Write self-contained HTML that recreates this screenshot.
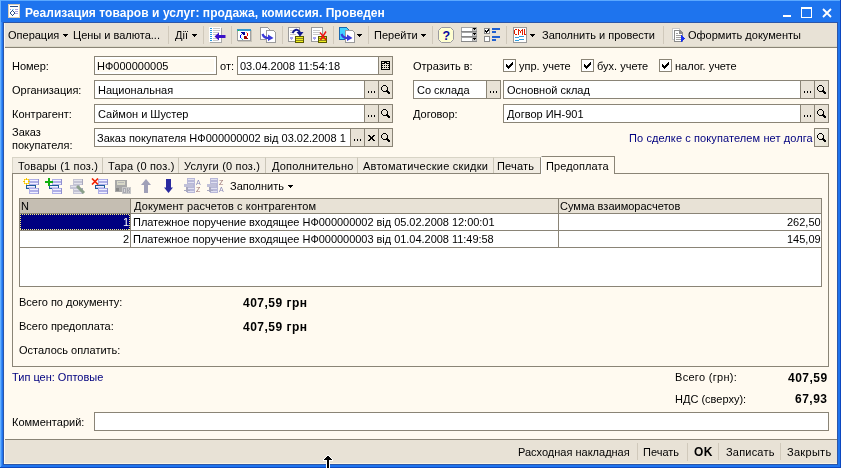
<!DOCTYPE html>
<html><head><meta charset="utf-8">
<style>
*{box-sizing:border-box;margin:0;padding:0}
html,body{width:841px;height:468px;overflow:hidden}
body{position:relative;background:#1e74ee;font:11px "Liberation Sans",sans-serif;color:#000}
.a{position:absolute}
svg.a{display:block}
.t{position:absolute;will-change:transform;white-space:pre;line-height:13px;font:11px "Liberation Sans",sans-serif}
.b{font-weight:bold}
.sep{position:absolute;width:1px;background:#d0c9bb}
.inp{position:absolute;border:1px solid #8a8476;height:19px}
.dots{position:absolute;width:1px;height:2px;background:#000;box-shadow:3px 0 0 #000,6px 0 0 #000}
.chk{position:absolute;width:13px;height:13px;border:1px solid #8a8476;background:#fff}
.tab{position:absolute;top:157px;height:16px;background:#f1ece2;border-top:1px solid #d8d4c6;border-right:1px solid #cbc6b8}
.line{position:absolute;background:#8a8476}
</style></head><body>

<div class="a" style="left:0;top:0;width:841px;height:1px;background:#5aa8ff"></div>
<div class="a" style="left:0;top:0;width:1px;height:468px;background:#64b0ff"></div>
<div class="a" style="left:1px;top:22px;width:1px;height:444px;background:#3c8cf8"></div>
<div class="a" style="left:3px;top:22px;width:1px;height:443px;background:#2c56a8"></div>
<div class="a" style="left:837px;top:22px;width:1px;height:443px;background:#2c56a8"></div>
<div class="a" style="left:840px;top:0;width:1px;height:468px;background:#0c48c0"></div>
<div class="a" style="left:3px;top:464px;width:835px;height:1px;background:#2c56a8"></div>
<div class="a" style="left:3px;top:22px;width:835px;height:1px;background:#2c56a8"></div>
<div class="a" style="left:4px;top:23px;width:1px;height:441px;background:#faf8f0;z-index:1"></div>
<div class="a" style="left:0;top:467px;width:841px;height:1px;background:#0c48c0"></div>
<svg class="a" style="left:8px;top:4px" width="12" height="14" shape-rendering="crispEdges">
<rect x="0" y="0" width="12" height="14" fill="#d8ccb4"/><rect x="1" y="1" width="10" height="12" fill="#fff"/>
<rect x="2" y="2" width="8" height="1" fill="#2a4e86"/>
<rect x="2" y="5" width="1" height="1" fill="#9a8ee0"/><rect x="4" y="5" width="2" height="1" fill="#8fe0f8"/><rect x="7" y="5" width="3" height="1" fill="#a9a0e0"/>
<rect x="7" y="7" width="3" height="1" fill="#a9a0e0"/><rect x="7" y="9" width="3" height="1" fill="#a9a0e0"/>
<rect x="4" y="6" width="1" height="1" fill="#2a4e86"/><rect x="3" y="7" width="1" height="1" fill="#2a4e86"/><rect x="5" y="7" width="1" height="1" fill="#2a4e86"/>
<rect x="2" y="8" width="1" height="2" fill="#2a4e86"/><rect x="6" y="8" width="1" height="2" fill="#2a4e86"/>
<rect x="3" y="10" width="1" height="1" fill="#2a4e86"/><rect x="5" y="10" width="1" height="1" fill="#2a4e86"/><rect x="4" y="11" width="1" height="1" fill="#2a4e86"/>
</svg>
<div class="t" style="left:25px;top:6px;font-weight:bold;font-size:12px;color:#fff;letter-spacing:0.06px">Реализация товаров и услуг: продажа, комиссия. Проведен</div>
<div class="a" style="left:783px;top:15px;width:8px;height:2px;background:#fff"></div>
<div class="a" style="left:801px;top:7px;width:11px;height:11px;border:1px solid #fff;border-top-width:2px"></div>
<svg class="a" style="left:822px;top:8px" width="10" height="10" viewBox="0 0 10 10"><path d="M1 1 L9 9 M9 1 L1 9" stroke="#fff" stroke-width="1.8"/></svg>
<div class="a" style="left:4px;top:23px;width:833px;height:24px;background:#e8e2d6"></div>
<div class="a" style="left:4px;top:46px;width:833px;height:1px;background:#dcd8c8"></div>
<div class="a" style="left:4px;top:47px;width:833px;height:1px;background:#8a8476"></div>
<div class="t" style="left:8px;top:29px;">Операция</div>
<svg class="a" style="left:63px;top:34px" width="5" height="3" shape-rendering="crispEdges"><rect x="0" y="0" width="5" height="1"/><rect x="1" y="1" width="3" height="1"/><rect x="2" y="2" width="1" height="1"/></svg>
<div class="t" style="left:73px;top:29px;">Цены и валюта...</div>
<div class="sep" style="left:168px;top:26px;height:18px"></div>
<div class="t" style="left:175px;top:29px;">Дії</div>
<svg class="a" style="left:192px;top:34px" width="5" height="3" shape-rendering="crispEdges"><rect x="0" y="0" width="5" height="1"/><rect x="1" y="1" width="3" height="1"/><rect x="2" y="2" width="1" height="1"/></svg>
<div class="sep" style="left:203px;top:26px;height:18px"></div>
<svg class="a" style="left:209px;top:27px" width="17" height="16" shape-rendering="crispEdges">
<rect x="1" y="1" width="12" height="15" fill="#a8a8a8"/><rect x="0" y="0" width="12" height="15" fill="#fff"/>
<g fill="#2a9ae0"><rect x="1" y="1" width="2" height="1"/><rect x="1" y="3" width="2" height="1"/><rect x="1" y="5" width="2" height="1"/><rect x="1" y="7" width="2" height="1"/><rect x="1" y="9" width="2" height="1"/><rect x="1" y="11" width="2" height="1"/><rect x="1" y="13" width="2" height="1"/></g>
<g fill="#c8c8c8"><rect x="4" y="1" width="7" height="1"/><rect x="4" y="3" width="7" height="1"/><rect x="4" y="5" width="6" height="1"/><rect x="4" y="7" width="5" height="1"/><rect x="4" y="11" width="5" height="1"/><rect x="4" y="13" width="5" height="1"/></g>
</svg>
<svg class="a" style="left:214px;top:32px" width="12" height="9" viewBox="0 0 12 9"><path d="M0.5 4.5 L5 0.5 L5 3 L11.5 3 L11.5 6 L5 6 L5 8.5 Z" fill="#3a10c8"/></svg>
<div class="sep" style="left:231px;top:26px;height:18px"></div>
<svg class="a" style="left:237px;top:29px" width="15" height="13" shape-rendering="crispEdges"><rect x="1" y="12" width="14" height="1" fill="#c8c4b8"/><rect x="14" y="1" width="1" height="12" fill="#c8c4b8"/><rect x="0" y="0" width="1" height="1" fill="#3399cc"/><rect x="0" y="1" width="1" height="1" fill="#3399cc"/><rect x="0" y="11" width="1" height="1" fill="#a0a0a0"/><rect x="1" y="0" width="1" height="1" fill="#3399cc"/><rect x="1" y="1" width="1" height="1" fill="#20d020"/><rect x="1" y="11" width="1" height="1" fill="#a0a0a0"/><rect x="2" y="0" width="1" height="1" fill="#3399cc"/><rect x="2" y="1" width="1" height="1" fill="#3399cc"/><rect x="2" y="11" width="1" height="1" fill="#a0a0a0"/><rect x="3" y="0" width="1" height="1" fill="#3399cc"/><rect x="3" y="1" width="1" height="1" fill="#3399cc"/><rect x="3" y="11" width="1" height="1" fill="#a0a0a0"/><rect x="4" y="0" width="1" height="1" fill="#3399cc"/><rect x="4" y="1" width="1" height="1" fill="#3399cc"/><rect x="4" y="11" width="1" height="1" fill="#a0a0a0"/><rect x="5" y="0" width="1" height="1" fill="#3399cc"/><rect x="5" y="1" width="1" height="1" fill="#3399cc"/><rect x="5" y="11" width="1" height="1" fill="#a0a0a0"/><rect x="6" y="0" width="1" height="1" fill="#3399cc"/><rect x="6" y="1" width="1" height="1" fill="#3399cc"/><rect x="6" y="11" width="1" height="1" fill="#a0a0a0"/><rect x="7" y="0" width="1" height="1" fill="#3399cc"/><rect x="7" y="1" width="1" height="1" fill="#3399cc"/><rect x="7" y="11" width="1" height="1" fill="#a0a0a0"/><rect x="8" y="0" width="1" height="1" fill="#3399cc"/><rect x="8" y="1" width="1" height="1" fill="#3399cc"/><rect x="8" y="11" width="1" height="1" fill="#a0a0a0"/><rect x="9" y="0" width="1" height="1" fill="#3399cc"/><rect x="9" y="1" width="1" height="1" fill="#3399cc"/><rect x="9" y="11" width="1" height="1" fill="#a0a0a0"/><rect x="10" y="0" width="1" height="1" fill="#3399cc"/><rect x="10" y="1" width="1" height="1" fill="#3399cc"/><rect x="10" y="11" width="1" height="1" fill="#a0a0a0"/><rect x="11" y="0" width="1" height="1" fill="#3399cc"/><rect x="11" y="1" width="1" height="1" fill="#3399cc"/><rect x="11" y="11" width="1" height="1" fill="#a0a0a0"/><rect x="12" y="0" width="1" height="1" fill="#3399cc"/><rect x="12" y="1" width="1" height="1" fill="#3399cc"/><rect x="12" y="11" width="1" height="1" fill="#a0a0a0"/><rect x="13" y="0" width="1" height="1" fill="#3399cc"/><rect x="13" y="1" width="1" height="1" fill="#3399cc"/><rect x="13" y="11" width="1" height="1" fill="#a0a0a0"/><rect x="0" y="2" width="1" height="1" fill="#a0a0a0"/><rect x="13" y="2" width="1" height="1" fill="#a0a0a0"/><rect x="1" y="2" width="1" height="1" fill="#ffffff"/><rect x="2" y="2" width="1" height="1" fill="#ffffff"/><rect x="3" y="2" width="1" height="1" fill="#ffffff"/><rect x="4" y="2" width="1" height="1" fill="#ffffff"/><rect x="5" y="2" width="1" height="1" fill="#ffffff"/><rect x="6" y="2" width="1" height="1" fill="#ffffff"/><rect x="7" y="2" width="1" height="1" fill="#ffffff"/><rect x="8" y="2" width="1" height="1" fill="#ffffff"/><rect x="9" y="2" width="1" height="1" fill="#ffffff"/><rect x="10" y="2" width="1" height="1" fill="#ffffff"/><rect x="11" y="2" width="1" height="1" fill="#ffffff"/><rect x="12" y="2" width="1" height="1" fill="#ffffff"/><rect x="0" y="3" width="1" height="1" fill="#a0a0a0"/><rect x="13" y="3" width="1" height="1" fill="#a0a0a0"/><rect x="1" y="3" width="1" height="1" fill="#ffffff"/><rect x="2" y="3" width="1" height="1" fill="#ffffff"/><rect x="3" y="3" width="1" height="1" fill="#ffffff"/><rect x="4" y="3" width="1" height="1" fill="#000099"/><rect x="5" y="3" width="1" height="1" fill="#000099"/><rect x="6" y="3" width="1" height="1" fill="#000099"/><rect x="7" y="3" width="1" height="1" fill="#000099"/><rect x="8" y="3" width="1" height="1" fill="#ffffff"/><rect x="9" y="3" width="1" height="1" fill="#ff9060"/><rect x="10" y="3" width="1" height="1" fill="#ffffff"/><rect x="11" y="3" width="1" height="1" fill="#ffffff"/><rect x="12" y="3" width="1" height="1" fill="#ffffff"/><rect x="0" y="4" width="1" height="1" fill="#a0a0a0"/><rect x="13" y="4" width="1" height="1" fill="#a0a0a0"/><rect x="1" y="4" width="1" height="1" fill="#ffffff"/><rect x="2" y="4" width="1" height="1" fill="#ffffff"/><rect x="3" y="4" width="1" height="1" fill="#ffffff"/><rect x="4" y="4" width="1" height="1" fill="#ffffff"/><rect x="5" y="4" width="1" height="1" fill="#000099"/><rect x="6" y="4" width="1" height="1" fill="#000099"/><rect x="7" y="4" width="1" height="1" fill="#000099"/><rect x="8" y="4" width="1" height="1" fill="#ffffff"/><rect x="9" y="4" width="1" height="1" fill="#ffffff"/><rect x="10" y="4" width="1" height="1" fill="#ff0000"/><rect x="11" y="4" width="1" height="1" fill="#ffffff"/><rect x="12" y="4" width="1" height="1" fill="#ffffff"/><rect x="0" y="5" width="1" height="1" fill="#a0a0a0"/><rect x="13" y="5" width="1" height="1" fill="#a0a0a0"/><rect x="1" y="5" width="1" height="1" fill="#ffffff"/><rect x="2" y="5" width="1" height="1" fill="#ffffff"/><rect x="3" y="5" width="1" height="1" fill="#ffffff"/><rect x="4" y="5" width="1" height="1" fill="#5070c0"/><rect x="5" y="5" width="1" height="1" fill="#ffffff"/><rect x="6" y="5" width="1" height="1" fill="#000099"/><rect x="7" y="5" width="1" height="1" fill="#000099"/><rect x="8" y="5" width="1" height="1" fill="#ffffff"/><rect x="9" y="5" width="1" height="1" fill="#ffffff"/><rect x="10" y="5" width="1" height="1" fill="#ff0000"/><rect x="11" y="5" width="1" height="1" fill="#ffffff"/><rect x="12" y="5" width="1" height="1" fill="#ffffff"/><rect x="0" y="6" width="1" height="1" fill="#a0a0a0"/><rect x="13" y="6" width="1" height="1" fill="#a0a0a0"/><rect x="1" y="6" width="1" height="1" fill="#ffffff"/><rect x="2" y="6" width="1" height="1" fill="#ffffff"/><rect x="3" y="6" width="1" height="1" fill="#0000ff"/><rect x="4" y="6" width="1" height="1" fill="#ffffff"/><rect x="5" y="6" width="1" height="1" fill="#ffffff"/><rect x="6" y="6" width="1" height="1" fill="#ffffff"/><rect x="7" y="6" width="1" height="1" fill="#ffffff"/><rect x="8" y="6" width="1" height="1" fill="#ffffff"/><rect x="9" y="6" width="1" height="1" fill="#ffffff"/><rect x="10" y="6" width="1" height="1" fill="#ff0000"/><rect x="11" y="6" width="1" height="1" fill="#ffffff"/><rect x="12" y="6" width="1" height="1" fill="#ffffff"/><rect x="0" y="7" width="1" height="1" fill="#a0a0a0"/><rect x="13" y="7" width="1" height="1" fill="#a0a0a0"/><rect x="1" y="7" width="1" height="1" fill="#ffffff"/><rect x="2" y="7" width="1" height="1" fill="#ffffff"/><rect x="3" y="7" width="1" height="1" fill="#0000ff"/><rect x="4" y="7" width="1" height="1" fill="#ffffff"/><rect x="5" y="7" width="1" height="1" fill="#ffffff"/><rect x="6" y="7" width="1" height="1" fill="#ffffff"/><rect x="7" y="7" width="1" height="1" fill="#990000"/><rect x="8" y="7" width="1" height="1" fill="#990000"/><rect x="9" y="7" width="1" height="1" fill="#c04040"/><rect x="10" y="7" width="1" height="1" fill="#ffffff"/><rect x="11" y="7" width="1" height="1" fill="#ffffff"/><rect x="12" y="7" width="1" height="1" fill="#ffffff"/><rect x="0" y="8" width="1" height="1" fill="#a0a0a0"/><rect x="13" y="8" width="1" height="1" fill="#a0a0a0"/><rect x="1" y="8" width="1" height="1" fill="#ffffff"/><rect x="2" y="8" width="1" height="1" fill="#ffffff"/><rect x="3" y="8" width="1" height="1" fill="#0000ff"/><rect x="4" y="8" width="1" height="1" fill="#ffffff"/><rect x="5" y="8" width="1" height="1" fill="#ffffff"/><rect x="6" y="8" width="1" height="1" fill="#ffffff"/><rect x="7" y="8" width="1" height="1" fill="#990000"/><rect x="8" y="8" width="1" height="1" fill="#990000"/><rect x="9" y="8" width="1" height="1" fill="#990000"/><rect x="10" y="8" width="1" height="1" fill="#ffffff"/><rect x="11" y="8" width="1" height="1" fill="#ffffff"/><rect x="12" y="8" width="1" height="1" fill="#ffffff"/><rect x="0" y="9" width="1" height="1" fill="#a0a0a0"/><rect x="13" y="9" width="1" height="1" fill="#a0a0a0"/><rect x="1" y="9" width="1" height="1" fill="#ffffff"/><rect x="2" y="9" width="1" height="1" fill="#ffffff"/><rect x="3" y="9" width="1" height="1" fill="#ffffff"/><rect x="4" y="9" width="1" height="1" fill="#40b0e0"/><rect x="5" y="9" width="1" height="1" fill="#ffffff"/><rect x="6" y="9" width="1" height="1" fill="#ffffff"/><rect x="7" y="9" width="1" height="1" fill="#990000"/><rect x="8" y="9" width="1" height="1" fill="#990000"/><rect x="9" y="9" width="1" height="1" fill="#990000"/><rect x="10" y="9" width="1" height="1" fill="#990000"/><rect x="11" y="9" width="1" height="1" fill="#ffffff"/><rect x="12" y="9" width="1" height="1" fill="#ffffff"/><rect x="0" y="10" width="1" height="1" fill="#a0a0a0"/><rect x="13" y="10" width="1" height="1" fill="#a0a0a0"/><rect x="1" y="10" width="1" height="1" fill="#ffffff"/><rect x="2" y="10" width="1" height="1" fill="#ffffff"/><rect x="3" y="10" width="1" height="1" fill="#ffffff"/><rect x="4" y="10" width="1" height="1" fill="#ffffff"/><rect x="5" y="10" width="1" height="1" fill="#40b0e0"/><rect x="6" y="10" width="1" height="1" fill="#ffffff"/><rect x="7" y="10" width="1" height="1" fill="#ffffff"/><rect x="8" y="10" width="1" height="1" fill="#ffffff"/><rect x="9" y="10" width="1" height="1" fill="#ffffff"/><rect x="10" y="10" width="1" height="1" fill="#ffffff"/><rect x="11" y="10" width="1" height="1" fill="#ffffff"/><rect x="12" y="10" width="1" height="1" fill="#ffffff"/></svg>
<svg class="a" style="left:260px;top:27px" width="17" height="17" shape-rendering="crispEdges">
<path d="M0.5 0.5 H7.5 L9.5 2.5 V12.5 H0.5 Z" fill="#fff" stroke="#9a9a9a"/>
<path d="M6.5 3.5 H13.5 L15.5 5.5 V15.5 H6.5 Z" fill="#fff" stroke="#9a9a9a"/>
</svg>
<svg class="a" style="left:261px;top:32px" width="14" height="9" viewBox="0 0 14 9"><path d="M1.5 2 Q3 6 7 6" fill="none" stroke="#3a3ad8" stroke-width="2.2"/><path d="M7 2.5 L12.5 6 L7 9 Z" fill="#3a3ad8"/></svg>
<div class="sep" style="left:282px;top:26px;height:18px"></div>
<svg class="a" style="left:288px;top:27px" width="17" height="17" shape-rendering="crispEdges">
<rect x="0" y="0" width="12" height="15" fill="#9a9a9a"/><rect x="1" y="1" width="10" height="13" fill="#fff"/>
<g fill="#c8c8c8"><rect x="2" y="3" width="4" height="1"/><rect x="2" y="5" width="3" height="1"/><rect x="2" y="7" width="6" height="1"/></g>
<rect x="2" y="10" width="3" height="2" fill="#a8a8f0"/><rect x="3" y="12" width="1" height="1" fill="#a8a8f0"/>
<rect x="7" y="9" width="9" height="7" fill="#5a5a00"/><rect x="8" y="10" width="7" height="5" fill="#f0f020"/>
<rect x="8" y="11" width="7" height="1" fill="#8a8a20"/><rect x="8" y="13" width="7" height="1" fill="#8a8a20"/>
</svg>
<svg class="a" style="left:291px;top:28px" width="14" height="10" viewBox="0 0 14 10"><path d="M1.5 5 Q5 -1 9 4" fill="none" stroke="#101890" stroke-width="2"/><path d="M5.5 4 L12.5 4 L9 8.5 Z" fill="#101890"/></svg>
<svg class="a" style="left:311px;top:27px" width="17" height="17" shape-rendering="crispEdges">
<rect x="0" y="0" width="12" height="15" fill="#9a9a9a"/><rect x="1" y="1" width="10" height="13" fill="#fff"/>
<g fill="#c8c8c8"><rect x="2" y="3" width="7" height="1"/><rect x="2" y="5" width="7" height="1"/><rect x="2" y="7" width="7" height="1"/></g>
<rect x="2" y="10" width="3" height="2" fill="#a8a8f0"/><rect x="3" y="12" width="1" height="1" fill="#a8a8f0"/>
<rect x="7" y="9" width="9" height="7" fill="#5a5a00"/><rect x="8" y="10" width="7" height="5" fill="#f0f020"/>
<rect x="8" y="11" width="7" height="1" fill="#8a8a20"/><rect x="8" y="13" width="7" height="1" fill="#8a8a20"/>
</svg>
<svg class="a" style="left:319px;top:31px" width="8" height="10" viewBox="0 0 8 10"><path d="M1 1.5 L7 9 M7 0.5 L1.5 9" stroke="#f01010" stroke-width="1.4"/></svg>
<div class="sep" style="left:333px;top:26px;height:18px"></div>
<svg class="a" style="left:339px;top:27px" width="17" height="17" shape-rendering="crispEdges">
<path d="M0.5 0.5 H7.5 L9.5 2.5 V12.5 H0.5 Z" fill="#40d0ff" stroke="#1868b0"/>
<path d="M6.5 3.5 H13.5 L15.5 5.5 V15.5 H6.5 Z" fill="#fff" stroke="#9a9a9a"/>
</svg>
<svg class="a" style="left:340px;top:32px" width="14" height="9" viewBox="0 0 14 9"><path d="M1.5 2 Q3 6 7 6" fill="none" stroke="#3a3ad8" stroke-width="2.2"/><path d="M7 2.5 L12.5 6 L7 9 Z" fill="#3a3ad8"/></svg>
<svg class="a" style="left:357px;top:34px" width="5" height="3" shape-rendering="crispEdges"><rect x="0" y="0" width="5" height="1"/><rect x="1" y="1" width="3" height="1"/><rect x="2" y="2" width="1" height="1"/></svg>
<div class="sep" style="left:368px;top:26px;height:18px"></div>
<div class="t" style="left:374px;top:29px;">Перейти</div>
<svg class="a" style="left:421px;top:34px" width="5" height="3" shape-rendering="crispEdges"><rect x="0" y="0" width="5" height="1"/><rect x="1" y="1" width="3" height="1"/><rect x="2" y="2" width="1" height="1"/></svg>
<div class="sep" style="left:432px;top:26px;height:18px"></div>
<svg class="a" style="left:438px;top:27px" width="17" height="16" viewBox="0 0 17 16">
<path d="M3.5 0.5 H12.5 L15.5 3.5 V12.5 L12.5 15.5 H3.5 L0.5 12.5 V3.5 Z" fill="#ffffd0" stroke="#9a9aa0"/>
<text x="8.2" y="12.6" text-anchor="middle" font-family="Liberation Sans" font-weight="bold" font-size="12.5" fill="#0808a0">?</text>
</svg>
<svg class="a" style="left:461px;top:27px" width="16" height="15" shape-rendering="crispEdges"><g transform="translate(0,0)"><rect x="0" y="0" width="16" height="5" fill="#a4a4a4"/><rect x="1" y="1" width="10" height="3" fill="#fff"/><rect x="12" y="1" width="3" height="3" fill="#c4c4c4"/><rect x="12" y="1" width="3" height="1" fill="#000"/><rect x="13" y="2" width="1" height="1" fill="#000"/><rect x="0" y="4" width="16" height="1" fill="#888"/></g><g transform="translate(0,5)"><rect x="0" y="0" width="16" height="5" fill="#a4a4a4"/><rect x="1" y="1" width="10" height="3" fill="#fff"/><rect x="12" y="1" width="3" height="3" fill="#c4c4c4"/><rect x="12" y="1" width="3" height="1" fill="#000"/><rect x="13" y="2" width="1" height="1" fill="#000"/><rect x="0" y="4" width="16" height="1" fill="#888"/></g><g transform="translate(0,10)"><rect x="0" y="0" width="16" height="5" fill="#a4a4a4"/><rect x="1" y="1" width="10" height="3" fill="#fff"/><rect x="12" y="1" width="3" height="3" fill="#c4c4c4"/><rect x="12" y="1" width="3" height="1" fill="#000"/><rect x="13" y="2" width="1" height="1" fill="#000"/><rect x="0" y="4" width="16" height="1" fill="#888"/></g></svg>
<svg class="a" style="left:484px;top:28px" width="17" height="14" shape-rendering="crispEdges">
<rect x="0" y="0" width="6" height="6" fill="#8a8a8a"/><rect x="1" y="1" width="4" height="4" fill="#fff"/>
<path d="M1 2h1v1h1v-1h1v-1h1v2h-1v1h-1v1h-1v-1h-1z" fill="#000"/>
<rect x="0" y="8" width="6" height="6" fill="#8a8a8a"/><rect x="1" y="9" width="4" height="4" fill="#fff"/>
<g fill="#2060d0"><rect x="8" y="0" width="8" height="2"/><rect x="8" y="3" width="4" height="2"/><rect x="8" y="8" width="8" height="2"/><rect x="8" y="11" width="4" height="2"/></g>
</svg>
<div class="sep" style="left:506px;top:26px;height:18px"></div>
<svg class="a" style="left:513px;top:27px" width="14" height="16" shape-rendering="crispEdges">
<rect x="0" y="0" width="14" height="16" fill="#9a9a9a"/><rect x="1" y="1" width="12" height="14" fill="#fff"/>
<g fill="#e02000"><rect x="2" y="2" width="1" height="1"/><rect x="3" y="2" width="1" height="1"/><rect x="5" y="2" width="1" height="1"/><rect x="9" y="2" width="1" height="1"/><rect x="11" y="2" width="1" height="1"/><rect x="1" y="3" width="1" height="1"/><rect x="5" y="3" width="1" height="1"/><rect x="6" y="3" width="1" height="1"/><rect x="8" y="3" width="1" height="1"/><rect x="9" y="3" width="1" height="1"/><rect x="11" y="3" width="1" height="1"/><rect x="1" y="4" width="1" height="1"/><rect x="5" y="4" width="1" height="1"/><rect x="7" y="4" width="1" height="1"/><rect x="9" y="4" width="1" height="1"/><rect x="11" y="4" width="1" height="1"/><rect x="1" y="5" width="1" height="1"/><rect x="5" y="5" width="1" height="1"/><rect x="7" y="5" width="1" height="1"/><rect x="9" y="5" width="1" height="1"/><rect x="11" y="5" width="1" height="1"/><rect x="1" y="6" width="1" height="1"/><rect x="5" y="6" width="1" height="1"/><rect x="9" y="6" width="1" height="1"/><rect x="11" y="6" width="1" height="1"/><rect x="2" y="7" width="1" height="1"/><rect x="3" y="7" width="1" height="1"/><rect x="5" y="7" width="1" height="1"/><rect x="9" y="7" width="1" height="1"/><rect x="11" y="7" width="1" height="1"/><rect x="12" y="7" width="1" height="1"/></g>
<g fill="#30a0e0"><rect x="2" y="10" width="4" height="1"/><rect x="6" y="9" width="5" height="1"/><rect x="2" y="13" width="4" height="1"/><rect x="6" y="12" width="5" height="1"/></g>
</svg>
<svg class="a" style="left:530px;top:34px" width="5" height="3" shape-rendering="crispEdges"><rect x="0" y="0" width="5" height="1"/><rect x="1" y="1" width="3" height="1"/><rect x="2" y="2" width="1" height="1"/></svg>
<div class="t" style="left:542px;top:29px;">Заполнить и провести</div>
<div class="sep" style="left:663px;top:26px;height:18px"></div>
<svg class="a" style="left:672px;top:28px" width="14" height="15" shape-rendering="crispEdges">
<rect x="0" y="0" width="8" height="12" fill="#c8c8c8"/><rect x="1" y="1" width="6" height="10" fill="#fff"/>
<path d="M2 2 H8 L11 5 V14 H2 Z" fill="#8a8a8a"/><path d="M3 3 H7 V6 H10 V13 H3 Z" fill="#fff"/>
<g fill="#a0a0a0"><rect x="4" y="5" width="2" height="1"/><rect x="4" y="7" width="5" height="1"/><rect x="4" y="9" width="5" height="1"/><rect x="4" y="11" width="5" height="1"/></g>
<path d="M9 7 L13 10.5 L9 14 Z" fill="#1830f0"/>
</svg>
<div class="t" style="left:688px;top:29px;">Оформить документы</div>
<div class="a" style="left:4px;top:48px;width:833px;height:391px;background:#fffaf0"></div>
<div class="t" style="left:12px;top:60px;">Номер:</div>
<div class="inp" style="left:94px;top:56px;width:123px;background:#fffaf0;box-shadow:inset 0 0 0 2px #fff"></div>
<div class="t" style="left:97px;top:60px;">НФ000000005</div>
<div class="t" style="left:220px;top:60px;">от:</div>
<div class="inp" style="left:237px;top:56px;width:156px;background:#fff"></div>
<div class="a" style="left:378px;top:57px;width:14px;height:17px;background:#e8e2d6;border-left:1px solid #8a8476"></div>
<svg class="a" style="left:381px;top:61px" width="9" height="9" shape-rendering="crispEdges" fill="#000"><rect x="0" y="0" width="1" height="1"/><rect x="1" y="0" width="1" height="1"/><rect x="2" y="0" width="1" height="1"/><rect x="3" y="0" width="1" height="1"/><rect x="4" y="0" width="1" height="1"/><rect x="5" y="0" width="1" height="1"/><rect x="6" y="0" width="1" height="1"/><rect x="7" y="0" width="1" height="1"/><rect x="8" y="0" width="1" height="1"/><rect x="0" y="1" width="1" height="1"/><rect x="3" y="1" width="1" height="1"/><rect x="4" y="1" width="1" height="1"/><rect x="5" y="1" width="1" height="1"/><rect x="8" y="1" width="1" height="1"/><rect x="0" y="2" width="1" height="1"/><rect x="1" y="2" width="1" height="1"/><rect x="2" y="2" width="1" height="1"/><rect x="3" y="2" width="1" height="1"/><rect x="5" y="2" width="1" height="1"/><rect x="6" y="2" width="1" height="1"/><rect x="7" y="2" width="1" height="1"/><rect x="8" y="2" width="1" height="1"/><rect x="0" y="3" width="1" height="1"/><rect x="8" y="3" width="1" height="1"/><rect x="0" y="4" width="1" height="1"/><rect x="1" y="4" width="1" height="1"/><rect x="3" y="4" width="1" height="1"/><rect x="5" y="4" width="1" height="1"/><rect x="7" y="4" width="1" height="1"/><rect x="8" y="4" width="1" height="1"/><rect x="0" y="5" width="1" height="1"/><rect x="8" y="5" width="1" height="1"/><rect x="0" y="6" width="1" height="1"/><rect x="1" y="6" width="1" height="1"/><rect x="3" y="6" width="1" height="1"/><rect x="5" y="6" width="1" height="1"/><rect x="7" y="6" width="1" height="1"/><rect x="8" y="6" width="1" height="1"/><rect x="0" y="7" width="1" height="1"/><rect x="8" y="7" width="1" height="1"/><rect x="0" y="8" width="1" height="1"/><rect x="1" y="8" width="1" height="1"/><rect x="2" y="8" width="1" height="1"/><rect x="3" y="8" width="1" height="1"/><rect x="4" y="8" width="1" height="1"/><rect x="5" y="8" width="1" height="1"/><rect x="6" y="8" width="1" height="1"/><rect x="7" y="8" width="1" height="1"/><rect x="8" y="8" width="1" height="1"/></svg>
<div class="t" style="left:240px;top:60px">03.04.2008 11:54:18</div>
<div class="t" style="left:413px;top:60px;">Отразить в:</div>
<div class="chk" style="left:503px;top:59px"></div>
<div class="a" style="left:506px;top:62px"><svg style="display:block" width="7" height="7" shape-rendering="crispEdges" fill="#000"><rect x="6" y="0" width="1" height="1"/><rect x="5" y="1" width="1" height="1"/><rect x="6" y="1" width="1" height="1"/><rect x="0" y="2" width="1" height="1"/><rect x="4" y="2" width="1" height="1"/><rect x="5" y="2" width="1" height="1"/><rect x="6" y="2" width="1" height="1"/><rect x="0" y="3" width="1" height="1"/><rect x="1" y="3" width="1" height="1"/><rect x="3" y="3" width="1" height="1"/><rect x="4" y="3" width="1" height="1"/><rect x="5" y="3" width="1" height="1"/><rect x="0" y="4" width="1" height="1"/><rect x="1" y="4" width="1" height="1"/><rect x="2" y="4" width="1" height="1"/><rect x="3" y="4" width="1" height="1"/><rect x="4" y="4" width="1" height="1"/><rect x="1" y="5" width="1" height="1"/><rect x="2" y="5" width="1" height="1"/><rect x="3" y="5" width="1" height="1"/><rect x="2" y="6" width="1" height="1"/></svg></div>
<div class="t" style="left:519px;top:60px;">упр. учете</div>
<div class="chk" style="left:581px;top:59px"></div>
<div class="a" style="left:584px;top:62px"><svg style="display:block" width="7" height="7" shape-rendering="crispEdges" fill="#000"><rect x="6" y="0" width="1" height="1"/><rect x="5" y="1" width="1" height="1"/><rect x="6" y="1" width="1" height="1"/><rect x="0" y="2" width="1" height="1"/><rect x="4" y="2" width="1" height="1"/><rect x="5" y="2" width="1" height="1"/><rect x="6" y="2" width="1" height="1"/><rect x="0" y="3" width="1" height="1"/><rect x="1" y="3" width="1" height="1"/><rect x="3" y="3" width="1" height="1"/><rect x="4" y="3" width="1" height="1"/><rect x="5" y="3" width="1" height="1"/><rect x="0" y="4" width="1" height="1"/><rect x="1" y="4" width="1" height="1"/><rect x="2" y="4" width="1" height="1"/><rect x="3" y="4" width="1" height="1"/><rect x="4" y="4" width="1" height="1"/><rect x="1" y="5" width="1" height="1"/><rect x="2" y="5" width="1" height="1"/><rect x="3" y="5" width="1" height="1"/><rect x="2" y="6" width="1" height="1"/></svg></div>
<div class="t" style="left:597px;top:60px;">бух. учете</div>
<div class="chk" style="left:659px;top:59px"></div>
<div class="a" style="left:662px;top:62px"><svg style="display:block" width="7" height="7" shape-rendering="crispEdges" fill="#000"><rect x="6" y="0" width="1" height="1"/><rect x="5" y="1" width="1" height="1"/><rect x="6" y="1" width="1" height="1"/><rect x="0" y="2" width="1" height="1"/><rect x="4" y="2" width="1" height="1"/><rect x="5" y="2" width="1" height="1"/><rect x="6" y="2" width="1" height="1"/><rect x="0" y="3" width="1" height="1"/><rect x="1" y="3" width="1" height="1"/><rect x="3" y="3" width="1" height="1"/><rect x="4" y="3" width="1" height="1"/><rect x="5" y="3" width="1" height="1"/><rect x="0" y="4" width="1" height="1"/><rect x="1" y="4" width="1" height="1"/><rect x="2" y="4" width="1" height="1"/><rect x="3" y="4" width="1" height="1"/><rect x="4" y="4" width="1" height="1"/><rect x="1" y="5" width="1" height="1"/><rect x="2" y="5" width="1" height="1"/><rect x="3" y="5" width="1" height="1"/><rect x="2" y="6" width="1" height="1"/></svg></div>
<div class="t" style="left:675px;top:60px;">налог. учете</div>
<div class="t" style="left:12px;top:84px;">Организация:</div>
<div class="inp" style="left:94px;top:80px;width:299px;background:#fff"></div>
<div class="a" style="left:364px;top:81px;width:14px;height:17px;background:#e8e2d6;border-left:1px solid #8a8476"></div>
<div class="dots" style="left:368px;top:91px"></div>
<div class="a" style="left:378px;top:81px;width:14px;height:17px;background:#e8e2d6;border-left:1px solid #8a8476"></div>
<svg class="a" style="left:381px;top:85px" width="10" height="10" shape-rendering="crispEdges" fill="#000"><rect x="0" y="2" width="1" height="1"/><rect x="0" y="3" width="1" height="1"/><rect x="0" y="4" width="1" height="1"/><rect x="1" y="1" width="1" height="1"/><rect x="1" y="5" width="1" height="1"/><rect x="2" y="0" width="1" height="1"/><rect x="2" y="6" width="1" height="1"/><rect x="3" y="0" width="1" height="1"/><rect x="3" y="6" width="1" height="1"/><rect x="4" y="0" width="1" height="1"/><rect x="4" y="6" width="1" height="1"/><rect x="5" y="1" width="1" height="1"/><rect x="5" y="5" width="1" height="1"/><rect x="5" y="6" width="1" height="1"/><rect x="6" y="2" width="1" height="1"/><rect x="6" y="3" width="1" height="1"/><rect x="6" y="4" width="1" height="1"/><rect x="6" y="5" width="1" height="1"/><rect x="6" y="6" width="1" height="1"/><rect x="6" y="7" width="1" height="1"/><rect x="7" y="6" width="1" height="1"/><rect x="7" y="7" width="1" height="1"/><rect x="7" y="8" width="1" height="1"/><rect x="8" y="7" width="1" height="1"/><rect x="8" y="8" width="1" height="1"/></svg>
<div class="t" style="left:98px;top:84px">Национальная</div>
<div class="inp" style="left:413px;top:80px;width:88px;background:#fff"></div>
<div class="a" style="left:486px;top:81px;width:14px;height:17px;background:#e8e2d6;border-left:1px solid #8a8476"></div>
<div class="dots" style="left:490px;top:91px"></div>
<div class="t" style="left:417px;top:84px">Со склада</div>
<div class="inp" style="left:503px;top:80px;width:326px;background:#fff"></div>
<div class="a" style="left:800px;top:81px;width:14px;height:17px;background:#e8e2d6;border-left:1px solid #8a8476"></div>
<div class="dots" style="left:804px;top:91px"></div>
<div class="a" style="left:814px;top:81px;width:14px;height:17px;background:#e8e2d6;border-left:1px solid #8a8476"></div>
<svg class="a" style="left:817px;top:85px" width="10" height="10" shape-rendering="crispEdges" fill="#000"><rect x="0" y="2" width="1" height="1"/><rect x="0" y="3" width="1" height="1"/><rect x="0" y="4" width="1" height="1"/><rect x="1" y="1" width="1" height="1"/><rect x="1" y="5" width="1" height="1"/><rect x="2" y="0" width="1" height="1"/><rect x="2" y="6" width="1" height="1"/><rect x="3" y="0" width="1" height="1"/><rect x="3" y="6" width="1" height="1"/><rect x="4" y="0" width="1" height="1"/><rect x="4" y="6" width="1" height="1"/><rect x="5" y="1" width="1" height="1"/><rect x="5" y="5" width="1" height="1"/><rect x="5" y="6" width="1" height="1"/><rect x="6" y="2" width="1" height="1"/><rect x="6" y="3" width="1" height="1"/><rect x="6" y="4" width="1" height="1"/><rect x="6" y="5" width="1" height="1"/><rect x="6" y="6" width="1" height="1"/><rect x="6" y="7" width="1" height="1"/><rect x="7" y="6" width="1" height="1"/><rect x="7" y="7" width="1" height="1"/><rect x="7" y="8" width="1" height="1"/><rect x="8" y="7" width="1" height="1"/><rect x="8" y="8" width="1" height="1"/></svg>
<div class="t" style="left:507px;top:84px">Основной склад</div>
<div class="t" style="left:12px;top:108px;">Контрагент:</div>
<div class="inp" style="left:94px;top:104px;width:299px;background:#fff"></div>
<div class="a" style="left:364px;top:105px;width:14px;height:17px;background:#e8e2d6;border-left:1px solid #8a8476"></div>
<div class="dots" style="left:368px;top:115px"></div>
<div class="a" style="left:378px;top:105px;width:14px;height:17px;background:#e8e2d6;border-left:1px solid #8a8476"></div>
<svg class="a" style="left:381px;top:109px" width="10" height="10" shape-rendering="crispEdges" fill="#000"><rect x="0" y="2" width="1" height="1"/><rect x="0" y="3" width="1" height="1"/><rect x="0" y="4" width="1" height="1"/><rect x="1" y="1" width="1" height="1"/><rect x="1" y="5" width="1" height="1"/><rect x="2" y="0" width="1" height="1"/><rect x="2" y="6" width="1" height="1"/><rect x="3" y="0" width="1" height="1"/><rect x="3" y="6" width="1" height="1"/><rect x="4" y="0" width="1" height="1"/><rect x="4" y="6" width="1" height="1"/><rect x="5" y="1" width="1" height="1"/><rect x="5" y="5" width="1" height="1"/><rect x="5" y="6" width="1" height="1"/><rect x="6" y="2" width="1" height="1"/><rect x="6" y="3" width="1" height="1"/><rect x="6" y="4" width="1" height="1"/><rect x="6" y="5" width="1" height="1"/><rect x="6" y="6" width="1" height="1"/><rect x="6" y="7" width="1" height="1"/><rect x="7" y="6" width="1" height="1"/><rect x="7" y="7" width="1" height="1"/><rect x="7" y="8" width="1" height="1"/><rect x="8" y="7" width="1" height="1"/><rect x="8" y="8" width="1" height="1"/></svg>
<div class="t" style="left:98px;top:108px">Саймон и Шустер</div>
<div class="t" style="left:413px;top:108px;">Договор:</div>
<div class="inp" style="left:503px;top:104px;width:326px;background:#fff"></div>
<div class="a" style="left:800px;top:105px;width:14px;height:17px;background:#e8e2d6;border-left:1px solid #8a8476"></div>
<div class="dots" style="left:804px;top:115px"></div>
<div class="a" style="left:814px;top:105px;width:14px;height:17px;background:#e8e2d6;border-left:1px solid #8a8476"></div>
<svg class="a" style="left:817px;top:109px" width="10" height="10" shape-rendering="crispEdges" fill="#000"><rect x="0" y="2" width="1" height="1"/><rect x="0" y="3" width="1" height="1"/><rect x="0" y="4" width="1" height="1"/><rect x="1" y="1" width="1" height="1"/><rect x="1" y="5" width="1" height="1"/><rect x="2" y="0" width="1" height="1"/><rect x="2" y="6" width="1" height="1"/><rect x="3" y="0" width="1" height="1"/><rect x="3" y="6" width="1" height="1"/><rect x="4" y="0" width="1" height="1"/><rect x="4" y="6" width="1" height="1"/><rect x="5" y="1" width="1" height="1"/><rect x="5" y="5" width="1" height="1"/><rect x="5" y="6" width="1" height="1"/><rect x="6" y="2" width="1" height="1"/><rect x="6" y="3" width="1" height="1"/><rect x="6" y="4" width="1" height="1"/><rect x="6" y="5" width="1" height="1"/><rect x="6" y="6" width="1" height="1"/><rect x="6" y="7" width="1" height="1"/><rect x="7" y="6" width="1" height="1"/><rect x="7" y="7" width="1" height="1"/><rect x="7" y="8" width="1" height="1"/><rect x="8" y="7" width="1" height="1"/><rect x="8" y="8" width="1" height="1"/></svg>
<div class="t" style="left:507px;top:108px">Догвор ИН-901</div>
<div class="t" style="left:12px;top:126px;">Заказ</div>
<div class="t" style="left:12px;top:139px;">покупателя:</div>
<div class="inp" style="left:94px;top:128px;width:299px;background:#fff"></div>
<div class="a" style="left:350px;top:129px;width:14px;height:17px;background:#e8e2d6;border-left:1px solid #8a8476"></div>
<div class="dots" style="left:354px;top:139px"></div>
<div class="a" style="left:364px;top:129px;width:14px;height:17px;background:#e8e2d6;border-left:1px solid #8a8476"></div>
<svg class="a" style="left:368px;top:135px" width="7" height="6" shape-rendering="crispEdges" fill="#000"><rect x="0" y="0" width="1" height="1"/><rect x="1" y="0" width="1" height="1"/><rect x="5" y="0" width="1" height="1"/><rect x="6" y="0" width="1" height="1"/><rect x="1" y="1" width="1" height="1"/><rect x="2" y="1" width="1" height="1"/><rect x="4" y="1" width="1" height="1"/><rect x="5" y="1" width="1" height="1"/><rect x="2" y="2" width="1" height="1"/><rect x="3" y="2" width="1" height="1"/><rect x="4" y="2" width="1" height="1"/><rect x="2" y="3" width="1" height="1"/><rect x="3" y="3" width="1" height="1"/><rect x="4" y="3" width="1" height="1"/><rect x="1" y="4" width="1" height="1"/><rect x="2" y="4" width="1" height="1"/><rect x="4" y="4" width="1" height="1"/><rect x="5" y="4" width="1" height="1"/><rect x="0" y="5" width="1" height="1"/><rect x="1" y="5" width="1" height="1"/><rect x="5" y="5" width="1" height="1"/><rect x="6" y="5" width="1" height="1"/></svg>
<div class="a" style="left:378px;top:129px;width:14px;height:17px;background:#e8e2d6;border-left:1px solid #8a8476"></div>
<svg class="a" style="left:381px;top:133px" width="10" height="10" shape-rendering="crispEdges" fill="#000"><rect x="0" y="2" width="1" height="1"/><rect x="0" y="3" width="1" height="1"/><rect x="0" y="4" width="1" height="1"/><rect x="1" y="1" width="1" height="1"/><rect x="1" y="5" width="1" height="1"/><rect x="2" y="0" width="1" height="1"/><rect x="2" y="6" width="1" height="1"/><rect x="3" y="0" width="1" height="1"/><rect x="3" y="6" width="1" height="1"/><rect x="4" y="0" width="1" height="1"/><rect x="4" y="6" width="1" height="1"/><rect x="5" y="1" width="1" height="1"/><rect x="5" y="5" width="1" height="1"/><rect x="5" y="6" width="1" height="1"/><rect x="6" y="2" width="1" height="1"/><rect x="6" y="3" width="1" height="1"/><rect x="6" y="4" width="1" height="1"/><rect x="6" y="5" width="1" height="1"/><rect x="6" y="6" width="1" height="1"/><rect x="6" y="7" width="1" height="1"/><rect x="7" y="6" width="1" height="1"/><rect x="7" y="7" width="1" height="1"/><rect x="7" y="8" width="1" height="1"/><rect x="8" y="7" width="1" height="1"/><rect x="8" y="8" width="1" height="1"/></svg>
<div class="a" style="left:95px;top:129px;width:255px;height:17px;overflow:hidden"><div class="t" style="left:2px;top:3px;">Заказ покупателя НФ000000002 від 03.02.2008 1</div></div>
<div class="t" style="left:629px;top:132px;color:#00007f;letter-spacing:0.1px">По сделке с покупателем нет долга</div>
<div class="a" style="left:814px;top:128px;width:15px;height:19px;background:linear-gradient(135deg,#f6f4ec,#e6e2d2);border:1px solid #8a8476"></div>
<svg class="a" style="left:817px;top:133px" width="10" height="10" shape-rendering="crispEdges" fill="#000"><rect x="0" y="2" width="1" height="1"/><rect x="0" y="3" width="1" height="1"/><rect x="0" y="4" width="1" height="1"/><rect x="1" y="1" width="1" height="1"/><rect x="1" y="5" width="1" height="1"/><rect x="2" y="0" width="1" height="1"/><rect x="2" y="6" width="1" height="1"/><rect x="3" y="0" width="1" height="1"/><rect x="3" y="6" width="1" height="1"/><rect x="4" y="0" width="1" height="1"/><rect x="4" y="6" width="1" height="1"/><rect x="5" y="1" width="1" height="1"/><rect x="5" y="5" width="1" height="1"/><rect x="5" y="6" width="1" height="1"/><rect x="6" y="2" width="1" height="1"/><rect x="6" y="3" width="1" height="1"/><rect x="6" y="4" width="1" height="1"/><rect x="6" y="5" width="1" height="1"/><rect x="6" y="6" width="1" height="1"/><rect x="6" y="7" width="1" height="1"/><rect x="7" y="6" width="1" height="1"/><rect x="7" y="7" width="1" height="1"/><rect x="7" y="8" width="1" height="1"/><rect x="8" y="7" width="1" height="1"/><rect x="8" y="8" width="1" height="1"/></svg>
<div class="tab" style="left:12px;width:91px;border-left:1px solid #d8d4c6;"></div>
<div class="t" style="left:18px;top:160px;letter-spacing:0.18px">Товары (1 поз.)</div>
<div class="tab" style="left:103px;width:76px;"></div>
<div class="t" style="left:108px;top:160px;letter-spacing:0.18px">Тара (0 поз.)</div>
<div class="tab" style="left:179px;width:87px;"></div>
<div class="t" style="left:184px;top:160px;letter-spacing:0.18px">Услуги (0 поз.)</div>
<div class="tab" style="left:266px;width:92px;"></div>
<div class="t" style="left:272px;top:160px;letter-spacing:0.18px">Дополнительно</div>
<div class="tab" style="left:358px;width:136px;"></div>
<div class="t" style="left:363px;top:160px;letter-spacing:0.25px">Автоматические скидки</div>
<div class="tab" style="left:494px;width:47px;border-right-color:#8a8476;"></div>
<div class="t" style="left:497px;top:160px;letter-spacing:0.18px">Печать</div>
<div class="a" style="left:541px;top:156px;width:74px;height:18px;background:#fffaf0;border-top:1px solid #8a8476;border-left:1px solid #fff;border-right:1px solid #8a8476"></div>
<div class="t" style="left:546px;top:160px;letter-spacing:0.1px">Предоплата</div>
<div class="line" style="left:12px;top:173px;width:529px;height:1px"></div>
<div class="line" style="left:614px;top:173px;width:215px;height:1px"></div>
<div class="line" style="left:12px;top:173px;width:1px;height:194px"></div>
<div class="line" style="left:828px;top:173px;width:1px;height:194px"></div>
<div class="line" style="left:12px;top:366px;width:817px;height:1px"></div>
<svg class="a" style="left:23px;top:178px" width="16" height="16" shape-rendering="crispEdges"><rect x="6" y="1" width="10" height="6" fill="#b0b0e8"/><rect x="7" y="2" width="8" height="1" fill="#f0f0ff"/><rect x="7" y="5" width="8" height="1" fill="#f0f0ff"/><rect x="15" y="1" width="1" height="6" fill="#9090d0"/><rect x="3" y="7" width="10" height="4" fill="#1c5a9a"/><rect x="4" y="8" width="8" height="2" fill="#c8c8f0"/><rect x="4" y="8" width="8" height="1" fill="#f0f0ff"/><rect x="6" y="10" width="10" height="6" fill="#b0b0e8"/><rect x="7" y="11" width="8" height="1" fill="#f0f0ff"/><rect x="7" y="14" width="8" height="1" fill="#f0f0ff"/><rect x="15" y="10" width="1" height="6" fill="#9090d0"/></svg>
<svg class="a" style="left:23px;top:178px" width="7" height="7" shape-rendering="crispEdges"><rect x="3" y="0" width="1" height="1" fill="#f8d000"/><rect x="0" y="3" width="1" height="1" fill="#f8d000"/><rect x="6" y="3" width="1" height="1" fill="#f8d000"/><rect x="3" y="6" width="1" height="1" fill="#f8d000"/><rect x="1" y="1" width="1" height="1" fill="#f8c800"/><rect x="5" y="1" width="1" height="1" fill="#f8c800"/><rect x="1" y="5" width="1" height="1" fill="#f8c800"/><rect x="5" y="5" width="1" height="1" fill="#f8c800"/><rect x="2" y="1" width="1" height="1" fill="#ffe040"/><rect x="3" y="1" width="1" height="1" fill="#f0b000"/><rect x="4" y="1" width="1" height="1" fill="#ffe040"/><rect x="1" y="2" width="1" height="1" fill="#ffe040"/><rect x="5" y="2" width="1" height="1" fill="#ffe040"/><rect x="1" y="3" width="1" height="1" fill="#f0b000"/><rect x="5" y="3" width="1" height="1" fill="#f0b000"/><rect x="1" y="4" width="1" height="1" fill="#ffe040"/><rect x="5" y="4" width="1" height="1" fill="#ffe040"/><rect x="2" y="5" width="1" height="1" fill="#ffe040"/><rect x="3" y="5" width="1" height="1" fill="#f0b000"/><rect x="4" y="5" width="1" height="1" fill="#ffe040"/><rect x="2" y="2" width="1" height="1" fill="#ffffff"/><rect x="2" y="3" width="1" height="1" fill="#ffffff"/><rect x="2" y="4" width="1" height="1" fill="#ffffff"/><rect x="3" y="2" width="1" height="1" fill="#ffffff"/><rect x="3" y="3" width="1" height="1" fill="#ffffff"/><rect x="3" y="4" width="1" height="1" fill="#ffffff"/><rect x="4" y="2" width="1" height="1" fill="#ffffff"/><rect x="4" y="3" width="1" height="1" fill="#ffffff"/><rect x="4" y="4" width="1" height="1" fill="#ffffff"/></svg>
<svg class="a" style="left:46px;top:178px" width="16" height="16" shape-rendering="crispEdges"><rect x="6" y="1" width="10" height="6" fill="#b0b0e8"/><rect x="7" y="2" width="8" height="1" fill="#f0f0ff"/><rect x="7" y="5" width="8" height="1" fill="#f0f0ff"/><rect x="15" y="1" width="1" height="6" fill="#9090d0"/><rect x="3" y="7" width="10" height="4" fill="#1c5a9a"/><rect x="4" y="8" width="8" height="2" fill="#c8c8f0"/><rect x="4" y="8" width="8" height="1" fill="#f0f0ff"/><rect x="6" y="10" width="10" height="6" fill="#b0b0e8"/><rect x="7" y="11" width="8" height="1" fill="#f0f0ff"/><rect x="7" y="14" width="8" height="1" fill="#f0f0ff"/><rect x="15" y="10" width="1" height="6" fill="#9090d0"/></svg>
<svg class="a" style="left:45px;top:178px" width="9" height="9" shape-rendering="crispEdges"><rect x="3" y="0" width="2" height="8" fill="#10b010"/><rect x="0" y="3" width="8" height="2" fill="#10b010"/></svg>
<svg class="a" style="left:67px;top:178px" width="16" height="16" shape-rendering="crispEdges"><rect x="6" y="1" width="10" height="6" fill="#c4c4d4"/><rect x="7" y="2" width="8" height="1" fill="#e4e4ec"/><rect x="7" y="5" width="8" height="1" fill="#e4e4ec"/><rect x="15" y="1" width="1" height="6" fill="#a8a8bc"/><rect x="3" y="7" width="10" height="4" fill="#c4c4d4"/><rect x="4" y="8" width="8" height="1" fill="#e4e4ec"/><rect x="6" y="10" width="10" height="6" fill="#c4c4d4"/><rect x="7" y="11" width="8" height="1" fill="#e4e4ec"/><rect x="7" y="14" width="8" height="1" fill="#e4e4ec"/><rect x="15" y="10" width="1" height="6" fill="#a8a8bc"/></svg>
<svg class="a" style="left:76px;top:185px" width="10" height="9" viewBox="0 0 10 9"><path d="M1 1 L8 8" stroke="#8aa08a" stroke-width="3"/></svg>
<svg class="a" style="left:92px;top:178px" width="16" height="16" shape-rendering="crispEdges"><rect x="6" y="1" width="10" height="6" fill="#b0b0e8"/><rect x="7" y="2" width="8" height="1" fill="#f0f0ff"/><rect x="7" y="5" width="8" height="1" fill="#f0f0ff"/><rect x="15" y="1" width="1" height="6" fill="#9090d0"/><rect x="3" y="7" width="10" height="4" fill="#1c5a9a"/><rect x="4" y="8" width="8" height="2" fill="#c8c8f0"/><rect x="4" y="8" width="8" height="1" fill="#f0f0ff"/><rect x="6" y="10" width="10" height="6" fill="#b0b0e8"/><rect x="7" y="11" width="8" height="1" fill="#f0f0ff"/><rect x="7" y="14" width="8" height="1" fill="#f0f0ff"/><rect x="15" y="10" width="1" height="6" fill="#9090d0"/></svg>
<svg class="a" style="left:91px;top:178px" width="8" height="7" viewBox="0 0 8 7"><path d="M1 0.5 L7 6.5 M7 0.5 L1 6.5" stroke="#f02000" stroke-width="1.6"/></svg>
<svg class="a" style="left:115px;top:180px" width="16" height="14" shape-rendering="crispEdges">
<rect x="0" y="0" width="12" height="12" fill="#a8a8a8"/><rect x="2" y="1" width="8" height="4" fill="#d8d8c8"/><rect x="3" y="2" width="6" height="1" fill="#b8b8b8"/><rect x="1" y="8" width="3" height="3" fill="#888"/>
<rect x="7" y="7" width="9" height="7" fill="#c8c8c8"/><rect x="8" y="8" width="3" height="5" fill="#a8a8b0"/><rect x="9" y="9" width="1" height="3" fill="#d8d8d8"/><rect x="12" y="8" width="1" height="5" fill="#a8a8b0"/><rect x="13" y="10" width="1" height="1" fill="#a8a8b0"/><rect x="14" y="8" width="1" height="2" fill="#a8a8b0"/><rect x="14" y="11" width="1" height="2" fill="#a8a8b0"/>
</svg>
<svg class="a" style="left:141px;top:179px" width="10" height="14" shape-rendering="crispEdges"><rect x="3" y="5" width="4" height="9" fill="#a0a0b8"/><path d="M0 6 L5 0 L10 6 Z" fill="#a0a0b8" shape-rendering="auto"/></svg>
<svg class="a" style="left:164px;top:179px" width="10" height="14" shape-rendering="crispEdges"><rect x="2" y="0" width="5" height="9" fill="#2a2aa0"/><path d="M0 8.5 L9 8.5 L4.5 14 Z" fill="#2a2aa0" shape-rendering="auto"/></svg>
<svg class="a" style="left:184px;top:178px" width="17" height="16" shape-rendering="crispEdges"><rect x="3" y="0" width="8" height="15" fill="#b8b8d8"/><rect x="4" y="1" width="6" height="1" fill="#e0e0f0"/><rect x="4" y="4" width="6" height="1" fill="#e0e0f0"/><rect x="4" y="10" width="6" height="1" fill="#e0e0f0"/><rect x="4" y="13" width="6" height="1" fill="#e0e0f0"/><rect x="0" y="6" width="9" height="3" fill="#c0c0d8"/><rect x="2" y="9" width="2" height="5" fill="#a8a8c0"/><rect x="0" y="12" width="6" height="1" fill="#a8a8c0"/></svg><div class="t" style="left:196px;top:179px;font-size:7px;line-height:7px;color:#8888b8">A</div><div class="t" style="left:196px;top:186px;font-size:7px;line-height:7px;color:#987070">Z</div>
<svg class="a" style="left:207px;top:178px" width="17" height="16" shape-rendering="crispEdges"><rect x="3" y="0" width="8" height="15" fill="#b8b8d8"/><rect x="4" y="1" width="6" height="1" fill="#e0e0f0"/><rect x="4" y="4" width="6" height="1" fill="#e0e0f0"/><rect x="4" y="10" width="6" height="1" fill="#e0e0f0"/><rect x="4" y="13" width="6" height="1" fill="#e0e0f0"/><rect x="0" y="6" width="9" height="3" fill="#c0c0d8"/><rect x="2" y="9" width="2" height="5" fill="#a8a8c0"/><rect x="0" y="12" width="6" height="1" fill="#a8a8c0"/></svg><div class="t" style="left:219px;top:179px;font-size:7px;line-height:7px;color:#987070">Z</div><div class="t" style="left:219px;top:186px;font-size:7px;line-height:7px;color:#8888b8">A</div>
<div class="t" style="left:230px;top:180px;">Заполнить</div>
<svg class="a" style="left:288px;top:185px" width="5" height="3" shape-rendering="crispEdges"><rect x="0" y="0" width="5" height="1"/><rect x="1" y="1" width="3" height="1"/><rect x="2" y="2" width="1" height="1"/></svg>
<div class="a" style="left:19px;top:198px;width:803px;height:89px;background:#fff;border:1px solid #8a8476"></div>
<div class="a" style="left:20px;top:199px;width:110px;height:14px;background:#c5beb2"></div>
<div class="a" style="left:131px;top:199px;width:690px;height:14px;background:#e8e2d6"></div>
<div class="line" style="left:20px;top:213px;width:801px;height:1px"></div>
<div class="line" style="left:20px;top:230px;width:801px;height:1px"></div>
<div class="line" style="left:20px;top:247px;width:801px;height:1px"></div>
<div class="line" style="left:130px;top:199px;width:1px;height:48px"></div>
<div class="line" style="left:558px;top:199px;width:1px;height:48px"></div>
<div class="a" style="left:20px;top:214px;width:110px;height:16px;background:#000080"></div>
<div class="a" style="left:20px;top:214px;width:110px;height:1px;background:repeating-linear-gradient(90deg,#f8f080 0 1px,transparent 1px 2px)"></div>
<div class="a" style="left:20px;top:229px;width:110px;height:1px;background:repeating-linear-gradient(90deg,#f8f080 0 1px,transparent 1px 2px)"></div>
<div class="a" style="left:20px;top:214px;width:1px;height:16px;background:repeating-linear-gradient(180deg,#f8f080 0 1px,transparent 1px 2px)"></div>
<div class="a" style="left:129px;top:215px;width:1px;height:15px;background:repeating-linear-gradient(180deg,#f8f080 0 1px,transparent 1px 2px)"></div>
<div class="t" style="left:21px;top:200px;">N</div>
<div class="t" style="left:134px;top:200px;letter-spacing:0.12px">Документ расчетов с контрагентом</div>
<div class="t" style="left:560px;top:200px;">Сумма взаиморасчетов</div>
<div class="t" style="left:123px;top:216px;color:#fff">1</div>
<div class="t" style="left:133px;top:216px;letter-spacing:-0.03px">Платежное поручение входящее НФ000000002 від 05.02.2008 12:00:01</div>
<div class="t" style="left:787px;top:216px;">262,50</div>
<div class="t" style="left:123px;top:233px;">2</div>
<div class="t" style="left:133px;top:233px;letter-spacing:-0.03px">Платежное поручение входящее НФ000000003 від 01.04.2008 11:49:58</div>
<div class="t" style="left:787px;top:233px;">145,09</div>
<div class="t" style="left:19px;top:296px;">Всего по документу:</div>
<div class="t" style="left:243px;top:296px;font-weight:bold;font-size:12px;letter-spacing:0.5px">407,59 грн</div>
<div class="t" style="left:19px;top:320px;">Всего предоплата:</div>
<div class="t" style="left:243px;top:320px;font-weight:bold;font-size:12px;letter-spacing:0.5px">407,59 грн</div>
<div class="t" style="left:19px;top:344px;">Осталось оплатить:</div>
<div class="t" style="left:12px;top:371px;color:#00007f">Тип цен: Оптовые</div>
<div class="t" style="left:675px;top:371px;letter-spacing:0.3px">Всего (грн):</div>
<div class="t" style="left:788px;top:371px;font-weight:bold;font-size:12px;letter-spacing:0.5px">407,59</div>
<div class="t" style="left:675px;top:393px;">НДС (сверху):</div>
<div class="t" style="left:795px;top:392px;font-weight:bold;font-size:12px;letter-spacing:0.5px">67,93</div>
<div class="t" style="left:12px;top:416px;">Комментарий:</div>
<div class="inp" style="left:94px;top:412px;width:735px;background:#fff"></div>
<div class="a" style="left:4px;top:439px;width:833px;height:1px;background:#8a8476"></div>
<div class="a" style="left:4px;top:440px;width:833px;height:24px;background:#e8e2d6"></div>
<div class="a" style="left:4px;top:463px;width:833px;height:1px;background:#f8f4e4"></div>
<div class="t" style="left:518px;top:446px;">Расходная накладная</div>
<div class="sep" style="left:637px;top:443px;height:17px"></div>
<div class="t" style="left:643px;top:446px;">Печать</div>
<div class="sep" style="left:687px;top:443px;height:18px"></div>
<div class="t" style="left:694px;top:445px;font-weight:bold;font-size:12px;letter-spacing:0.3px">OK</div>
<div class="sep" style="left:718px;top:443px;height:17px"></div>
<div class="t" style="left:726px;top:446px;letter-spacing:0.2px">Записать</div>
<div class="sep" style="left:780px;top:443px;height:17px"></div>
<div class="t" style="left:787px;top:446px;letter-spacing:0.3px">Закрыть</div>
<svg class="a" style="left:322px;top:455px" width="12" height="14" shape-rendering="crispEdges"><rect x="5" y="0" width="2" height="1" fill="#fff"/><rect x="4" y="1" width="4" height="1" fill="#fff"/><rect x="3" y="2" width="6" height="1" fill="#fff"/><rect x="2" y="3" width="8" height="1" fill="#fff"/><rect x="1" y="4" width="10" height="1" fill="#fff"/><rect x="1" y="5" width="10" height="1" fill="#fff"/><rect x="4" y="6" width="4" height="1" fill="#fff"/><rect x="4" y="7" width="4" height="1" fill="#fff"/><rect x="4" y="8" width="4" height="1" fill="#fff"/><rect x="4" y="9" width="4" height="1" fill="#fff"/><rect x="4" y="10" width="4" height="1" fill="#fff"/><rect x="4" y="11" width="4" height="1" fill="#fff"/><rect x="4" y="12" width="4" height="1" fill="#fff"/><rect x="4" y="13" width="4" height="1" fill="#fff"/><rect x="5" y="1" width="2" height="1" fill="#000"/><rect x="4" y="2" width="4" height="1" fill="#000"/><rect x="3" y="3" width="6" height="1" fill="#000"/><rect x="2" y="4" width="8" height="1" fill="#000"/><rect x="5" y="5" width="2" height="1" fill="#000"/><rect x="5" y="6" width="2" height="1" fill="#000"/><rect x="5" y="7" width="2" height="1" fill="#000"/><rect x="5" y="8" width="2" height="1" fill="#000"/><rect x="5" y="9" width="2" height="1" fill="#000"/><rect x="5" y="10" width="2" height="1" fill="#000"/><rect x="5" y="11" width="2" height="1" fill="#000"/><rect x="5" y="12" width="2" height="1" fill="#000"/><rect x="5" y="13" width="2" height="1" fill="#000"/></svg>
</body></html>
